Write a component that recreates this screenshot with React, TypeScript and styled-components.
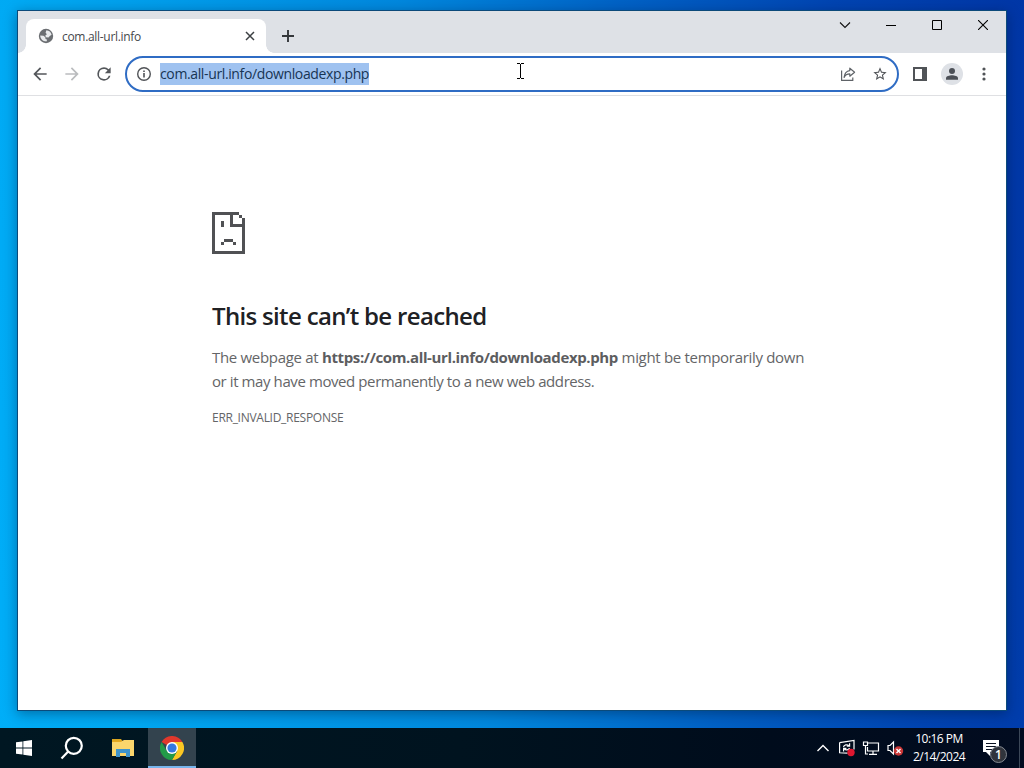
import * as React from "react";
import styled, { createGlobalStyle } from "styled-components";

const GlobalStyle = createGlobalStyle`
  * {
    box-sizing: border-box;
  }
  body {
    margin: 0;
    overflow: hidden;
    font-family: "Open Sans", "Noto Sans", sans-serif;
  }
  p, h1 {
    margin: 0;
  }
  svg {
    display: block;
    flex: none;
  }
`;

const SDesktop = styled.div`
  display: flex;
  flex-direction: column;
  width: 1024px;
  height: 768px;
  overflow: hidden;
  background: linear-gradient(
    83deg,
    #00aef8 0%,
    #00a8f2 12%,
    #0088de 44%,
    #0062c6 64%,
    #0044b2 83%,
    #0036a6 100%
  );
`;

const SWorkspace = styled.div`
  flex: 1;
  padding: 10px 17px 17px;
`;

const SWindow = styled.div`
  position: relative;
  display: flex;
  flex-direction: column;
  height: 701px;
  width: 990px;
  border: 1px solid #0b4a7a;
  background: #fff;
  box-shadow: 0 3px 12px rgba(0, 20, 50, 0.4);
`;

const STabStrip = styled.div`
  display: flex;
  height: 42px;
  padding-left: 8px;
  background: #dee1e6;
`;

const STab = styled.div`
  position: relative;
  display: flex;
  align-items: center;
  width: 240px;
  height: 34px;
  margin-top: 8px;
  padding: 0 10px 0 12px;
  border-radius: 8px 8px 0 0;
  background: #fff;

  &::before,
  &::after {
    content: "";
    position: absolute;
    bottom: 0;
    width: 8px;
    height: 8px;
  }
  &::before {
    left: -8px;
    background: radial-gradient(circle at 0 0, transparent 7.5px, #fff 8px);
  }
  &::after {
    right: -8px;
    background: radial-gradient(circle at 100% 0, transparent 7.5px, #fff 8px);
  }
`;

const STabTitle = styled.span`
  flex: 1;
  margin-left: 8px;
  font-size: 12px;
  letter-spacing: -0.31px;
  color: #45484c;
`;

const SNewTab = styled.div`
  display: flex;
  align-items: center;
  margin-left: 15px;
  padding-top: 8px;
`;

const SCaptionButtons = styled.div`
  display: flex;
  height: 28px;
  margin-left: auto;
`;

const SCaptionButton = styled.div`
  display: flex;
  align-items: center;
  justify-content: center;
  width: 46px;
`;

const SToolbar = styled.div`
  display: flex;
  align-items: center;
  height: 43px;
  padding: 0 12px 0 12px;
  border-bottom: 1px solid #dfe0e3;
`;

const SToolButton = styled.div<{ $gap?: number }>`
  display: flex;
  align-items: center;
  justify-content: center;
  width: 20px;
  height: 20px;
  margin-right: ${(props) => props.$gap ?? 12}px;
`;

const SOmnibox = styled.div`
  display: flex;
  align-items: center;
  width: 774px;
  height: 36px;
  margin-right: 11px;
  padding: 0 7px 0 9px;
  border: 2px solid #2f6cc4;
  border-radius: 18px;
`;

const SUrl = styled.span`
  height: 22px;
  width: 209px;
  margin: 0 auto 0 8px;
  font-size: 14px;
  line-height: 22px;
  letter-spacing: -0.37px;
  white-space: nowrap;
  color: #173554;
  background: #9fc2f0;
`;

const SAvatar = styled.div`
  display: flex;
  align-items: center;
  justify-content: center;
  width: 22px;
  height: 22px;
  margin: 0 11px;
  border-radius: 50%;
  background: #dee1e6;
`;

const SPage = styled.div`
  flex: 1;
  padding: 116px 194px 0;
`;

const SHeading = styled.h1`
  margin-top: 45px;
  font-size: 24px;
  font-weight: 600;
  line-height: 34px;
  letter-spacing: -0.67px;
  color: #202124;
`;

const SMessage = styled.p`
  margin-top: 12px;
  font-size: 15px;
  line-height: 24px;
  white-space: nowrap;
  color: #646567;
`;

const SMessageLine = styled.span<{ $tracking: number }>`
  display: block;
  letter-spacing: ${(props) => props.$tracking}px;

  strong {
    font-weight: 700;
    letter-spacing: -0.37px;
    color: #5c5d5f;
  }
`;

const SErrorCode = styled.p`
  margin-top: 16px;
  font-size: 12px;
  line-height: 18px;
  letter-spacing: -0.28px;
  color: #646567;
`;

const SPointer = styled.div`
  position: absolute;
  left: 499px;
  top: 52px;
`;

const STaskbar = styled.div`
  display: flex;
  height: 40px;
  background: linear-gradient(90deg, #001722, #00131f 45%, #000c1c 75%, #020c20);
`;

const STask = styled.div<{ $active?: boolean }>`
  display: flex;
  align-items: center;
  justify-content: center;
  width: 48px;
  ${(props) =>
    props.$active &&
    `
    margin-left: 1px;
    background: #33434e;
    box-shadow: inset 0 -2px 0 #77b5ec;
  `}
`;

const SFolderTask = styled(STask)`
  margin-left: 3px;
`;

const STray = styled.div`
  display: flex;
  align-items: center;
  margin-left: auto;
`;

const STrayIcon = styled.div`
  display: flex;
  justify-content: center;
  width: 24px;
`;

const SClock = styled.div`
  width: 68px;
  margin-right: -4px;
  padding-right: 4px;
  text-align: center;
  font-size: 12px;
  line-height: 18px;
  letter-spacing: -0.52px;
  color: #fff;
`;

const SNotifications = styled.div`
  position: relative;
  width: 49px;
  height: 40px;
  padding: 12px 0 0 12px;
  border-right: 1px solid #3c4858;
`;

const SBadge = styled.span`
  position: absolute;
  left: 19px;
  top: 18px;
  width: 17px;
  height: 17px;
  border: 1px solid #858a92;
  border-radius: 50%;
  font-size: 12px;
  font-weight: 600;
  line-height: 15px;
  text-align: center;
  color: #fff;
  background: #30343c;
`;

const SShowDesktop = styled.div`
  width: 4px;
`;

const GlobeIcon = () => (
  <svg width="16" height="16" viewBox="0 0 16 16">
    <circle cx="8" cy="8" r="7.2" fill="#6b6e72" />
    <path
      d="M8.400 2.200c2.700.1 4.700 2 5.200 4.500l-1.800 1.300-1.300 1.500-2.600-.3-.6-1.600 1.600-1.300-1.300-1.600zM2.200 7.600l3.300.2 1.800 1.500.2 1.800 1.700.6-.8 1.900C4.800 13.400 2.300 11 2.200 7.600z"
      fill="#e8eaec"
    />
  </svg>
);

const NavIcon: React.FC<{ d: string; color?: string }> = ({ d, color }) => (
  <svg width="20" height="20" viewBox="0 0 24 24">
    <path d={d} fill={color ?? "#54575b"} />
  </svg>
);

// one rect per run of cells on an 11 x 14 grid: x, y, width, height
const SAD_PAGE = [
  [0, 0, 9, 1],
  [0, 0, 1, 14],
  [0, 13, 11, 1],
  [10, 2, 1, 12],
  [9, 1, 1, 1],
  [6, 0, 1, 5],
  [6, 4, 5, 1],
  [3, 3, 1, 2],
  [4, 9, 3, 1],
  [3, 10, 1, 1],
  [7, 10, 1, 1],
];

const SadPage = () => (
  <svg width="33" height="42" viewBox="0 0 11 14" shapeRendering="crispEdges">
    {SAD_PAGE.map(([x, y, w, h], i) => (
      <rect key={i} x={x} y={y} width={w} height={h} fill="#505154" />
    ))}
  </svg>
);

const ChromeLogo = () => (
  <svg width="24" height="24" viewBox="0 0 24 24">
    <path d="M12 12 1.6 6A12 12 0 0 1 22.4 6H12z" fill="#e0382c" />
    <path d="M12 6h10.4A12 12 0 0 1 12 24l5.2-9z" fill="#fbc723" />
    <path d="M1.6 6 6.8 15 12 18l5.2-3L12 24A12 12 0 0 1 1.6 6z" fill="#229a48" />
    <circle cx="12" cy="12" r="6" fill="#fff" />
    <circle cx="12" cy="12" r="4.6" fill="#3478e0" />
  </svg>
);

const BrowserTabs = () => (
  <STabStrip>
    <STab>
      <GlobeIcon />
      <STabTitle>com.all-url.info</STabTitle>
      <svg width="12" height="12" viewBox="0 0 12 12" stroke="#3c4043" strokeWidth="1.5">
        <path d="M2 2l8 8M10 2l-8 8" />
      </svg>
    </STab>
    <SNewTab>
      <svg width="14" height="14" viewBox="0 0 14 14" stroke="#34373a" strokeWidth="1.9">
        <path d="M7 1v12M1 7h12" />
      </svg>
    </SNewTab>
    <SCaptionButtons>
      <SCaptionButton>
        <svg width="12" height="8" viewBox="0 0 12 8" fill="none" stroke="#111" strokeWidth="1.1">
          <path d="M1 1.5l5 5 5-5" />
        </svg>
      </SCaptionButton>
      <SCaptionButton>
        <svg width="10" height="10" viewBox="0 0 10 10">
          <path d="M0 5h10v1H0z" />
        </svg>
      </SCaptionButton>
      <SCaptionButton>
        <svg width="10" height="10" viewBox="0 0 10 10" fill="none" stroke="#000">
          <path d="M.5.5h9v9h-9z" />
        </svg>
      </SCaptionButton>
      <SCaptionButton>
        <svg width="10" height="10" viewBox="0 0 10 10" stroke="#000" strokeWidth="1.1">
          <path d="M0 0l10 10M10 0L0 10" />
        </svg>
      </SCaptionButton>
    </SCaptionButtons>
  </STabStrip>
);

const BrowserToolbar = () => (
  <SToolbar>
    <SToolButton>
      <NavIcon d="M20 11H7.830l5.590-5.590L12 4l-8 8 8 8 1.410-1.410L7.830 13H20v-2z" />
    </SToolButton>
    <SToolButton>
      <NavIcon
        color="#babcbe"
        d="M12 4l-1.410 1.410L16.170 11H4v2h12.170l-5.580 5.590L12 20l8-8z"
      />
    </SToolButton>
    <SToolButton $gap={11}>
      <NavIcon d="M17.650 6.350A7.958 7.958 0 0 0 12 4a8 8 0 1 0 7.730 10h-2.080A6 6 0 1 1 12 6c1.660 0 3.140.690 4.220 1.780L13 11h7V4l-2.350 2.350z" />
    </SToolButton>
    <SOmnibox>
      <svg width="16" height="16" viewBox="0 0 16 16">
        <circle cx="8" cy="8" r="6.300" fill="none" stroke="#505357" strokeWidth="1.400" />
        <path d="M7.200 4.400h1.600V6H7.200zM7.200 7h1.600v4.600H7.200z" fill="#505357" />
      </svg>
      <SUrl>com.all-url.info/downloadexp.php</SUrl>
      <SToolButton>
        <svg
          width="16"
          height="16"
          viewBox="0 0 16 16"
          fill="none"
          stroke="#5f6368"
          strokeWidth="1.200"
          strokeLinejoin="round"
        >
          <path d="M1.600 4.500v9.900h11.200v-3" />
          <path d="M9.800 2.200l4.800 4-4.800 4V7.900C7 7.900 5.200 9 4.100 11.400 4.500 7.600 6.300 5 9.800 4.600z" />
        </svg>
      </SToolButton>
      <SToolButton $gap={0}>
        <svg width="16" height="16" viewBox="0 0 24 24">
          <path
            fill="#505357"
            d="M22 9.240l-7.190-.620L12 2 9.190 8.630 2 9.240l5.460 4.730L5.820 21 12 17.270 18.180 21l-1.630-7.030L22 9.240zM12 15.400l-3.760 2.270 1-4.280-3.320-2.880 4.380-.380L12 6.100l1.710 4.040 4.380.380-3.320 2.880 1 4.280L12 15.400z"
          />
        </svg>
      </SToolButton>
    </SOmnibox>
    <SToolButton $gap={0}>
      <svg width="14" height="14" viewBox="0 0 14 14">
        <path d="M0 0h14v14H0zM2 2v10h7V2z" fill="#505357" fillRule="evenodd" />
      </svg>
    </SToolButton>
    <SAvatar>
      <svg width="14" height="14" viewBox="0 0 14 14" fill="#4c5057">
        <circle cx="7" cy="3.900" r="3" />
        <path d="M1 12.700v-1.500C1 9.200 4.500 8.300 7 8.300s6 .9 6 2.900v1.500z" />
      </svg>
    </SAvatar>
    <SToolButton $gap={0}>
      <svg width="4" height="14" viewBox="0 0 4 14" fill="#505357">
        <circle cx="2" cy="2" r="1.600" />
        <circle cx="2" cy="7" r="1.600" />
        <circle cx="2" cy="12" r="1.600" />
      </svg>
    </SToolButton>
  </SToolbar>
);

const ErrorPage = () => (
  <SPage>
    <SadPage />
    <SHeading>This site can’t be reached</SHeading>
    <SMessage>
      <SMessageLine $tracking={-0.31}>
        The webpage at <strong>https://com.all-url.info/downloadexp.php</strong> might be
        temporarily down
      </SMessageLine>
      <SMessageLine $tracking={-0.41}>
        or it may have moved permanently to a new web address.
      </SMessageLine>
    </SMessage>
    <SErrorCode>ERR_INVALID_RESPONSE</SErrorCode>
  </SPage>
);

const Taskbar = () => (
  <STaskbar>
    <STask>
      <svg width="16" height="16" viewBox="0 0 16 16" fill="#fff">
        <path d="M0 2.300L6.500 1.400v6.200H0zM7.300 1.200L16 0v7.600H7.300zM0 8.400h6.500v6.200L0 13.700zM7.300 8.400H16V16l-8.700-1.200z" />
      </svg>
    </STask>
    <STask>
      <svg width="24" height="24" viewBox="0 0 24 24" fill="none" stroke="#fff" strokeWidth="2.200">
        <circle cx="13.800" cy="9.800" r="8" />
        <path d="M8.200 15.600L1.500 22.400" />
      </svg>
    </STask>
    <SFolderTask>
      <svg width="22" height="20" viewBox="0 0 22 20">
        <path d="M0 1h9l1.500 2H0z" fill="#dba520" />
        <path d="M0 3h10l2-1h10v16H0z" fill="#fbd66c" />
        <path d="M0 2.500h9l1 1.500H0z" fill="#e6a91f" />
        <path d="M4 11h14v8h-4v-4H8v4H4z" fill="#3f94cb" />
      </svg>
    </SFolderTask>
    <STask $active>
      <ChromeLogo />
    </STask>
    <STray>
      <STrayIcon>
        <svg width="14" height="8" viewBox="0 0 14 8" fill="none" stroke="#fff" strokeWidth="1.400">
          <path d="M1.500 7L7 1.500 12.500 7" />
        </svg>
      </STrayIcon>
      <STrayIcon>
        <svg width="18" height="18" viewBox="0 0 18 18" fill="none" stroke="#fff" strokeWidth="1.200">
          <path d="M1.600 3.600L16 1.400v9M1.600 3.600v10.200l8 .4" />
          <path d="M5.500 8C6 6 9 5 11 6.600M11.600 4.200v3H8.800M11.500 9c-.8 2-3.600 2.500-5.200 1M5.600 12.400v-3h2.800" />
          <circle cx="13" cy="13.500" r="3.700" fill="#df1730" stroke="none" />
        </svg>
      </STrayIcon>
      <STrayIcon>
        <svg width="18" height="16" viewBox="0 0 18 16" fill="none" stroke="#fff" strokeWidth="1.200">
          <path d="M6 3h10.500v8H5.500V7M11 11v3M7 14.400h8" />
          <path d="M1.500 2h4v3.500h-4zM3.500 5.500V14h2.500" />
        </svg>
      </STrayIcon>
      <STrayIcon>
        <svg width="18" height="16" viewBox="0 0 18 16" fill="none" stroke="#fff" strokeWidth="1.200">
          <path d="M2 5.500h2L7.500 2v12L4 10.500H2z" />
          <circle cx="12.500" cy="11" r="4.700" fill="#c93636" stroke="none" />
          <path d="M10.500 9l4 4M14.500 9l-4 4" strokeWidth="1.400" />
        </svg>
      </STrayIcon>
      <SClock>
        <p>10:16 PM</p>
        <p>2/14/2024</p>
      </SClock>
      <SNotifications>
        <svg width="16" height="16" viewBox="0 0 16 16">
          <path d="M0 0h16v12H7v4l-4-4H0z" fill="#fff" />
          <path d="M3 3h10v1H3zM3 6h10v1H3zM3 9h7v1H3z" fill="#0a1222" />
        </svg>
        <SBadge>1</SBadge>
      </SNotifications>
      <SShowDesktop />
    </STray>
  </STaskbar>
);

export default function App() {
  return (
    <>
      <GlobalStyle />
      <SDesktop>
        <SWorkspace>
          <SWindow>
            <BrowserTabs />
            <BrowserToolbar />
            <ErrorPage />
            <SPointer>
              <svg width="8" height="16" viewBox="0 0 8 16" shapeRendering="crispEdges">
                <path d="M0 0h3v1h1V0h3v1H4v14h3v1H4v-1H3v1H0v-1h3V1H0z" fill="#000" />
              </svg>
            </SPointer>
          </SWindow>
        </SWorkspace>
        <Taskbar />
      </SDesktop>
    </>
  );
}
